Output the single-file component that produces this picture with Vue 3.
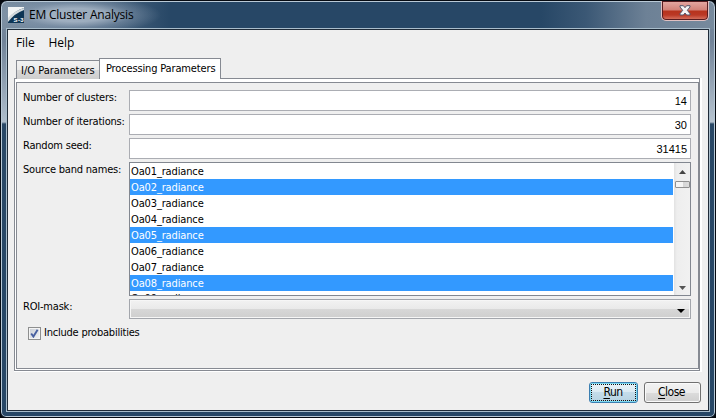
<script setup>
import { ref } from 'vue'

const fields = [
  { label: 'Number of clusters:', value: '14' },
  { label: 'Number of iterations:', value: '30' },
  { label: 'Random seed:', value: '31415' }
]
const bands = Array.from({ length: 9 }, (_, i) => `Oa0${i + 1}_radiance`)
const selected = ref([1, 4, 7])
</script>

<template>
  <div class="window">
    <header class="titlebar">
      <svg class="logo" width="16" height="16" viewBox="0 0 16 16">
        <rect width="16" height="16" fill="#0d3555" />
        <path d="M0 0H16V1Q6 4 0 12Z" fill="#f1f3f3" />
        <path d="M0 11Q6 4 16 1V3Q7 6 0 15Z" fill="#d3d9dc" />
        <text x="5.5" y="15" textLength="10" class="logo-text">S-3</text>
      </svg>
      <span class="title">EM Cluster Analysis</span>
      <button class="close-window" aria-label="Close window">
        <svg width="12" height="11" viewBox="0 0 12 11">
          <path d="M1 .7H4.4L6 2.7 7.6.7H11V2L8.3 5.3 11 8.7V10H7.6L6 8 4.4 10H1V8.7L3.7 5.3 1 2Z" fill="#f5f5f5" stroke="#53566b" stroke-width="1" />
        </svg>
      </button>
    </header>
    <main class="client">
      <nav class="menu"><span>File</span><span>Help</span></nav>
      <div class="tabs">
        <div class="tab">I/O Parameters</div>
        <div class="tab active">Processing Parameters</div>
      </div>
      <section class="panel">
        <div class="form">
          <div v-for="f in fields" :key="f.label" class="row">
            <label>{{ f.label }}</label>
            <div class="input">{{ f.value }}</div>
          </div>
          <div class="row list-row">
            <label>Source band names:</label>
            <div class="list">
              <div class="items">
                <div v-for="(b, i) in bands" :key="b" class="item" :class="{ on: selected.includes(i) }">{{ b }}</div>
              </div>
              <div class="scroll">
                <svg width="7" height="4" viewBox="0 0 7 4"><path d="M0 4L3.5 0 7 4Z" fill="#444" /></svg>
                <div class="thumb"></div>
                <svg class="down" width="7" height="4" viewBox="0 0 7 4"><path d="M0 0H7L3.5 4Z" fill="#555" /></svg>
              </div>
            </div>
          </div>
          <div class="row combo-row">
            <label>ROI-mask:</label>
            <div class="combo"><svg width="8" height="4" viewBox="0 0 8 4"><path d="M0 0H8L4 4Z" fill="#000" /></svg></div>
          </div>
          <div class="check">
            <span class="box"><svg width="9" height="9" viewBox="0 0 9 9"><path d="M1.2 4.5L3.4 7.6 7.6 .8" fill="none" stroke="#4860a0" stroke-width="1.9" /></svg></span>
            <span>Include probabilities</span>
          </div>
        </div>
      </section>
      <footer class="actions">
        <button class="btn run"><span class="focus"><span><u>R</u>un</span></span></button>
        <button class="btn"><span><u>C</u>lose</span></button>
      </footer>
    </main>
  </div>
</template>

<style>
body { margin: 0; background: #04070c; overflow: hidden; }
</style>

<style scoped>
* { box-sizing: border-box; }
.window {
  width: 716px; height: 418px; padding: 1px 5px 5px;
  border: 1px solid #060b12; border-radius: 7px 7px 6px 6px;
  box-shadow: inset 0 0 0 1px #b9c9d6;
  background:
    radial-gradient(ellipse 84px 19px at 76px 14px, rgba(174,188,203,.8) 35%, rgba(140,158,178,.45) 65%, transparent 100%) no-repeat,
    linear-gradient(90deg, #7c8fa2 0, #607891 70px, #274766 170px, #274766 540px, #3b5875 585px, #6d8196 645px, #778a9d 100%) top / 100% 28px no-repeat,
    linear-gradient(#788ba0 0, #718398 40px, #aebdcb 121px, #294866 123px, #274766 100%) left / 8px 100% no-repeat,
    linear-gradient(#788ba0 0, #718398 40px, #b7c4d0 121px, #294866 123px, #274766 100%) right / 8px 100% no-repeat,
    #274766;
  font: 11px/14px "DejaVu Sans Condensed", "DejaVu Sans", sans-serif;
  font-stretch: condensed; letter-spacing: -.2px;
  color: #000;
}
.titlebar { height: 26px; display: flex; align-items: flex-start; padding: 0 6px 0 2px; }
.logo { margin-top: 5px; flex: none; }
.logo-text { font: bold 6px "Liberation Sans", sans-serif; fill: #fff; }
.title { font: 12px/16px "Open Sans", sans-serif; font-stretch: normal; margin: 5px 0 0 5px; white-space: nowrap; letter-spacing: -.21px; }
.close-window {
  width: 48px; height: 20px; margin: -1px -5px 0 auto; padding: 0 0 1px; display: flex; align-items: center; justify-content: center;
  border: 1px solid #e0c0c1; border-top: 0; border-radius: 0 0 5px 5px;
  box-shadow: inset 0 0 0 1px #581c20;
  background: linear-gradient(#e5aaa5 0, #d28178 9px, #b7331d 10px, #bb3825 14px, #da7b69 100%);
}
.client {
  width: 704px; height: 384px; border: 1px solid #a9bdcb; background: #efefef;
  box-shadow: inset 0 0 0 1px #1f2b38; padding: 2px 8px 0 7px; overflow: hidden;
}
.menu { height: 27px; padding: 4px 0 0 2px; display: flex; gap: 14px; font: 12px/16px "Open Sans", sans-serif; letter-spacing: -.1px; }
.tabs { display: flex; align-items: flex-end; height: 21px; padding-left: 2px; position: relative; z-index: 1; }
.tab { width: 83px; height: 19px; border: 1px solid #868a92; border-width: 1px 0 0 1px; background: linear-gradient(#f2f2f2 0, #eaeaea 50%, #d8d8d8 51%, #cecece); padding: 3px 0 0 4px; white-space: nowrap; letter-spacing: 0; }
.active { width: 122px; height: 21px; border-width: 1px 1px 0 1px; background: #fff; padding: 3px 0 0 6px; letter-spacing: -.15px; }
.panel { width: 686px; height: 293px; margin-top: -1px; padding: 3px 0 1px 1px; border: 1px solid #868a92; background: #fff; box-shadow: 2px 0 #fff, 2px 1px #fff, 0 1px #fff; }
.form { width: 683px; height: 287px; border: 1px solid #868a92; background: #efefef; padding: 7px 7px 0 6px; }
.row { display: flex; height: 21px; margin-bottom: 3px; }
label { width: 106px; flex: none; white-space: nowrap; padding-top: 1px; }
.input { width: 562px; border: 1px solid #abadb3; background: #fff; text-align: right; padding: 4px 3px 0 0; font: 11px/13px "Liberation Sans", sans-serif; letter-spacing: 0; }
.list-row { height: 134px; }
.list { width: 562px; display: flex; border: 1px solid #828790; background: #fff; overflow: hidden; }
.items { width: 543px; }
.item { height: 16px; line-height: 16px; padding: 1px 0 0 1px; letter-spacing: -.14px; }
.item:last-child { padding-top: 0; }
.on { background: #3399ff; color: #fff; }
.scroll { width: 16px; margin-left: 1px; padding: 7px 0 5px; display: flex; flex-direction: column; align-items: center; background: linear-gradient(90deg, #e2e2e2, #eee 3px, #f1f1f1); }
.thumb { width: 15px; height: 7px; margin-top: 7px; border: 1px solid #909090; border-radius: 1px; background: linear-gradient(90deg, #f5f5f5 50%, #d5d5d5 51%, #ddd); }
.down { margin-top: auto; }
.combo-row { height: 20px; }
.combo { width: 562px; display: flex; align-items: center; justify-content: flex-end; padding: 4px 5px 0 0; border: 1px solid #a3a6ac; box-shadow: inset 0 0 0 1px #f6f6f6; background: linear-gradient(#f2f2f2, #e9e9e9 50%, #d7d7d7 51%, #cecece); }
.check { display: flex; align-items: center; padding: 4px 0 0 5px; gap: 3px; letter-spacing: -.22px; }
.box { width: 13px; height: 13px; border: 1px solid #8e8f8f; display: flex; align-items: center; justify-content: center; background: linear-gradient(135deg, #c9ced6, #f2f3f5); box-shadow: inset 0 0 0 1px #f4f4f4; }
.actions { display: flex; justify-content: flex-end; gap: 6px; margin-top: 11px; }
.btn { width: 57px; height: 21px; border: 1px solid #707070; border-radius: 3px; padding: 0 2px 1px 0; font: inherit; font-size: 12px; letter-spacing: -.5px; color: #000; box-shadow: inset 0 0 0 1px #fafafa; background: linear-gradient(#f2f2f2, #ebebeb 50%, #dcdcdc 51%, #cfcfcf); }
.run { width: 49px; border-color: #3c7fb1; padding: 1px; box-shadow: inset 0 0 0 1px #7bdaf3; background: linear-gradient(#eaf3f8, #dbeaf3 45%, #c4dcea 50%, #b6d2e2); }
.focus { display: flex; height: 17px; align-items: center; justify-content: center; border: 1px dotted #111; padding: 0 1px 1px 0; }
u { text-decoration-thickness: 1px; text-underline-offset: 2px; }
</style>
